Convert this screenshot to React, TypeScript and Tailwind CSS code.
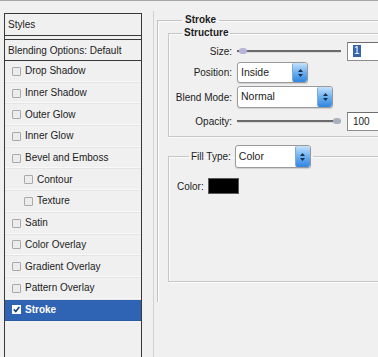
import React from "react";

const font = "font-['Liberation_Sans',Arial,sans-serif]";

function Check({ checked = false }: { checked?: boolean }) {
  if (checked) {
    return (
      <span className="w-[9px] h-[9px] border border-white bg-white flex items-center justify-center">
        <svg width="7" height="7" viewBox="0 0 7 7">
          <path d="M0.8 3.4 L2.8 5.6 L6.3 0.9" stroke="#1b3f80" strokeWidth="1.6" fill="none" />
        </svg>
      </span>
    );
  }
  return <span className="w-[9px] h-[9px] border border-[#a9a9a9] bg-[#ececec] rounded-[1px]" />;
}

function StyleRow({ label, sub = false, active = false }: { label: string; sub?: boolean; active?: boolean }) {
  return (
    <div
      className={
        "h-[21.7px] flex items-center gap-[4px] border-b " +
        (active
          ? "bg-[#2f63b3] text-white font-bold border-[#2a5aa3]"
          : "border-[#e4e4e4] shadow-[inset_0_-1px_0_#f8f8f8]") +
        (sub ? " pl-[19px]" : " pl-[7px]")
      }
    >
      <Check checked={active} />
      <span className="leading-none">{label}</span>
    </div>
  );
}

function Spinner() {
  return (
    <div className="w-[15px] h-full rounded-r-[3px] rounded-l-[2px] bg-gradient-to-b from-[#c4e2fb] via-[#6cb0ef] to-[#2f86e0] flex flex-col items-center justify-center gap-[2px] border-l border-[#7fa9d6]">
      <svg width="5" height="3" viewBox="0 0 5 3"><path d="M0 3 L2.5 0 L5 3 Z" fill="#1d2f48" /></svg>
      <svg width="5" height="3" viewBox="0 0 5 3"><path d="M0 0 L2.5 3 L5 0 Z" fill="#1d2f48" /></svg>
    </div>
  );
}

function Select({ value, width, height = "h-[21px]" }: { value: string; width: string; height?: string }) {
  return (
    <div className={`${width} ${height} flex items-stretch bg-white border border-[#9a9a9a] rounded-[3px] shadow-[0_1px_1px_#d0d0d0]`}>
      <span className="flex-1 flex items-center pl-[3px] text-[10.5px]">{value}</span>
      <Spinner />
    </div>
  );
}

function Slider({ at }: { at: "start" | "end" }) {
  return (
    <div className={"w-[104px] h-[8px] flex items-center " + (at === "start" ? "justify-start" : "justify-end")}>
      <div className="relative w-full h-[2px] bg-[#6b6b6b] shadow-[0_1px_0_#dcdcdc]">
        <span
          className={
            "absolute top-[-2px] w-[8px] h-[6px] rounded-full " +
            (at === "start" ? "left-[2px] bg-[#b6b4d8]" : "right-[0px] bg-[#a9b0bd]")
          }
        />
      </div>
    </div>
  );
}

function Field({ children }: { children: React.ReactNode }) {
  return (
    <div className="w-[40px] h-[19px] bg-white border border-[#8c8c8c] border-t-[#6e6e6e] flex items-center pl-[5px] text-[10px]">
      {children}
    </div>
  );
}

function Label({ text }: { text: string }) {
  return <span className="w-[64px] text-right pr-[1px]">{text}</span>;
}

export default function App() {
  return (
    <div className={`w-[378px] h-[357px] overflow-hidden bg-[#f0f0f0] border-t border-[#a6a6a6] flex text-[10px] text-[#1c1c1c] ${font}`}>
      {/* styles list */}
      <div className="ml-[4px] mt-[12px] w-[138px] shrink-0 border border-[#383838] border-b-0 flex flex-col bg-[#f0f0f0]">
        <div className="h-[22px] flex items-center pl-[3px] border-b border-[#383838]">Styles</div>
        <div className="h-[3px]" />
        <div className="h-[22px] flex items-center pl-[3px] border-t border-b border-[#383838]">
          Blending Options: Default
        </div>
        <StyleRow label="Drop Shadow" />
        <StyleRow label="Inner Shadow" />
        <StyleRow label="Outer Glow" />
        <StyleRow label="Inner Glow" />
        <StyleRow label="Bevel and Emboss" />
        <StyleRow label="Contour" sub />
        <StyleRow label="Texture" sub />
        <StyleRow label="Satin" />
        <StyleRow label="Color Overlay" />
        <StyleRow label="Gradient Overlay" />
        <StyleRow label="Pattern Overlay" />
        <StyleRow label="Stroke" active />
        <div className="flex-1" />
      </div>

      {/* settings pane */}
      <div className="ml-[11px] mt-[10px] border-l border-[#d2d2d2] pl-[3px] flex-1 shrink-0">
        <fieldset className="mt-[3px] w-[260px] border-l border-t border-[#c3c3c3] shadow-[inset_1px_1px_0_#fbfbfb] pl-[10px] pb-[20px]">
          <legend className="ml-[14px] px-[3px] font-bold leading-[12px]">Stroke</legend>

          <fieldset className="mt-[1px] border border-[#c6c6c6] shadow-[inset_1px_1px_0_#fbfbfb,1px_1px_0_#fbfbfb] pb-[5px]">
            <legend className="ml-[13px] px-[2px] font-bold leading-[12px]">Structure</legend>
            <div className="mt-[2px] h-[20px] flex items-center gap-[4px]">
              <Label text="Size:" />
              <Slider at="start" />
              <div className="ml-[2px]">
                <Field>
                  <span className="bg-[#3563ad] text-white px-[1px] leading-[12px]">1</span>
                </Field>
              </div>
            </div>
            <div className="mt-[1px] flex items-center gap-[4px]">
              <Label text="Position:" />
              <Select value="Inside" width="w-[71px]" />
            </div>
            <div className="mt-[3px] flex items-center gap-[4px]">
              <Label text="Blend Mode:" />
              <Select value="Normal" width="w-[96px]" height="h-[22px]" />
            </div>
            <div className="mt-[3px] h-[20px] flex items-center gap-[4px]">
              <Label text="Opacity:" />
              <Slider at="end" />
              <div className="ml-[2px]">
                <Field>100</Field>
              </div>
            </div>
          </fieldset>

          <fieldset className="mt-[8px] border border-[#c6c6c6] shadow-[inset_1px_1px_0_#fbfbfb,1px_1px_0_#fbfbfb] pl-[8px] pb-[87px]">
            <legend className="ml-[12px] px-[2px] flex items-center gap-[4px]">
              <span>Fill Type:</span>
              <Select value="Color" width="w-[76px]" height="h-[23px]" />
            </legend>
            <div className="mt-[10px] h-[16px] flex items-center gap-[4px]">
              <span>Color:</span>
              <span className="w-[31px] h-[16px] bg-black border border-[#5a5a5a]" />
            </div>
          </fieldset>
        </fieldset>
      </div>
    </div>
  );
}
